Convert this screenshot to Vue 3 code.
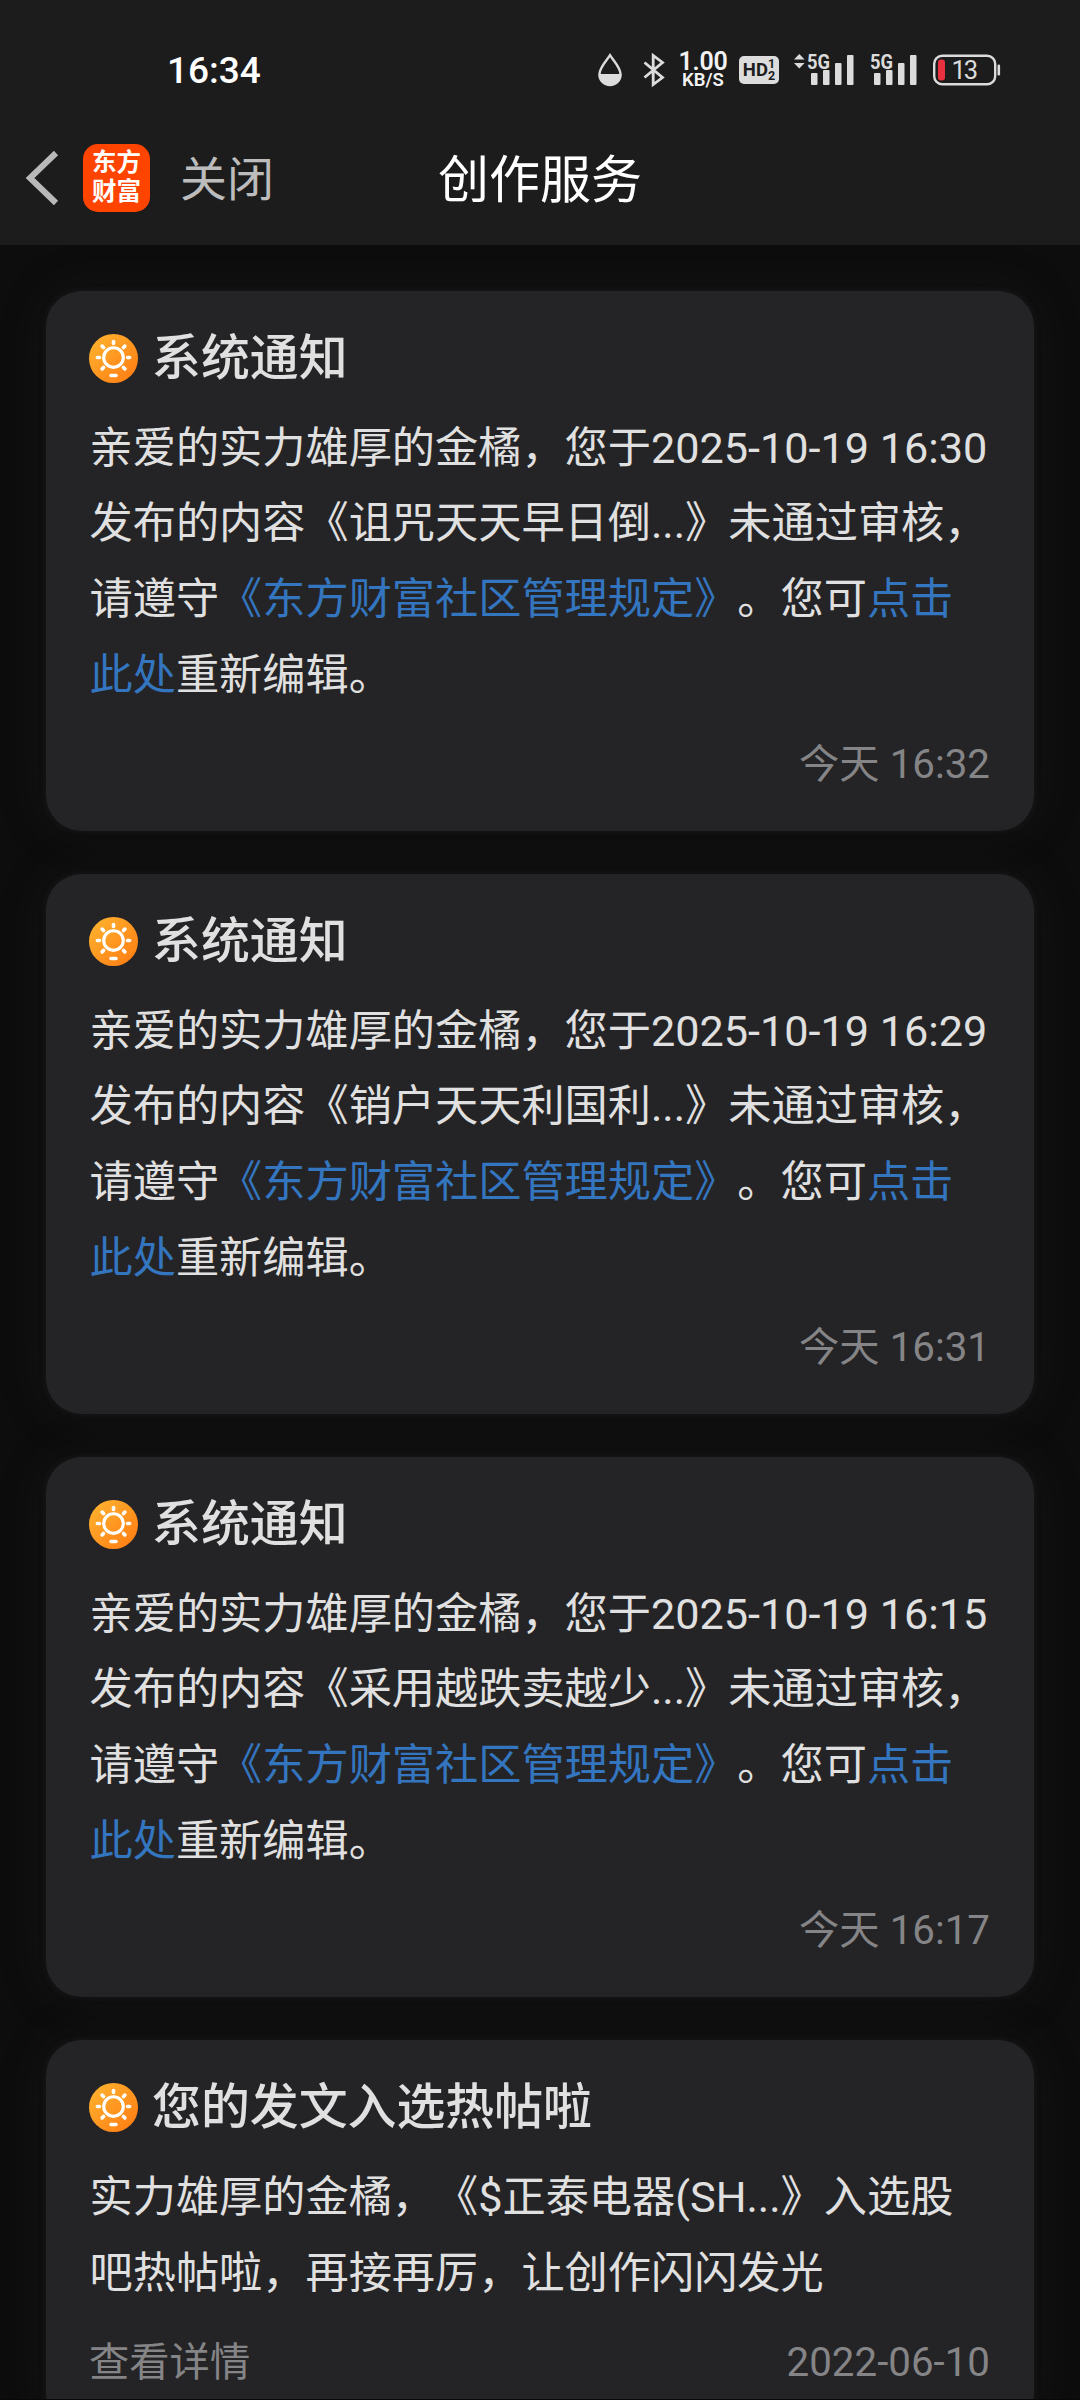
<script setup>
const notices = [
  { id: 1, title: '系统通知', at: '2025-10-19 16:30', post: '诅咒天天早日倒...', time: '今天 16:32' },
  { id: 2, title: '系统通知', at: '2025-10-19 16:29', post: '销户天天利国利...', time: '今天 16:31' },
  { id: 3, title: '系统通知', at: '2025-10-19 16:15', post: '采用越跌卖越少...', time: '今天 16:17' },
  {
    id: 4,
    title: '您的发文入选热帖啦',
    lines: ['实力雄厚的金橘，《$正泰电器(SH...》入选股', '吧热帖啦，再接再厉，让创作闪闪发光'],
    more: '查看详情',
    time: '2022-06-10'
  }
]
const rays = [0, 45, 90, 135, 225, 270, 315]
</script>

<template>
  <div class="page">
    <header class="header">
      <div class="status">
        <span class="clock">16:34</span>
        <div class="indicators">
          <svg class="drop" width="24" height="34" viewBox="0 0 24 34">
            <path d="M12 2.2C15 7 22.6 14.500 22.600 21.500A10.600 10.600 0 0 1 1.400 21.500C1.400 14.500 9 7 12 2.200Z" fill="none" stroke="#dcdcdc" stroke-width="2.400" />
            <path d="M1.400 21H22.600A10.600 10.600 0 0 1 1.400 21Z" fill="#dcdcdc" />
          </svg>
          <svg class="bt" width="22" height="34" viewBox="0 0 22 34">
            <path d="M1.500 9.500L19.500 24.500L10.200 31.500V2.500L19.500 9.500L1.500 24.500" fill="none" stroke="#dcdcdc" stroke-width="2.800" />
          </svg>
          <div class="speed"><b>1.00</b><span>KB/S</span></div>
          <div class="hd">
            <span class="hd-text">HD</span>
            <span class="hd-nums"><i>1</i><i>2</i></span>
          </div>
          <svg class="sig1" width="60" height="34" viewBox="0 0 60 34" fill="#dcdcdc">
            <path d="M0 6.500L5.300 1L10.600 6.500ZM0 10H10.600L5.300 15.500Z" />
            <text x="13" y="15.500" font-size="20.500" font-weight="700" textLength="23" lengthAdjust="spacingAndGlyphs">5G</text>
            <rect x="17" y="20" width="6.500" height="12" rx="1" />
            <rect x="29" y="17" width="6.500" height="15" rx="1" />
            <rect x="41" y="10" width="6.500" height="22" rx="1" />
            <rect x="53" y="2" width="6.500" height="30" rx="1" />
          </svg>
          <svg class="sig2" width="47" height="34" viewBox="0 0 47 34" fill="#dcdcdc">
            <text x="0" y="15.500" font-size="20.500" font-weight="700" textLength="23" lengthAdjust="spacingAndGlyphs">5G</text>
            <rect x="4" y="20" width="6.500" height="12" rx="1" />
            <rect x="16" y="17" width="6.500" height="15" rx="1" />
            <rect x="28" y="10" width="6.500" height="22" rx="1" />
            <rect x="40" y="2" width="6.500" height="30" rx="1" />
          </svg>
          <svg class="battery" width="68" height="34" viewBox="0 0 68 34">
            <rect x="1.200" y="2.700" width="61" height="28.600" rx="8" fill="none" stroke="#dcdcdc" stroke-width="2.400" />
            <rect x="5" y="6.500" width="7" height="21" rx="3" fill="#e8303e" />
            <rect x="64.500" y="11.500" width="2.600" height="11" rx="1.200" fill="#dcdcdc" />
            <text x="18.500" y="26" font-size="25.500" textLength="26.500" fill="#dcdcdc">13</text>
          </svg>
        </div>
      </div>
      <nav class="nav">
        <div class="left">
          <svg class="back" width="34" height="58" viewBox="0 0 34 58">
            <path d="M31 4L5 29L31 54" fill="none" stroke="#b9b9b9" stroke-width="6" />
          </svg>
          <div class="logo"><span>东方</span><span>财富</span></div>
          <span class="close">关闭</span>
        </div>
        <h1>创作服务</h1>
        <div class="right"></div>
      </nav>
    </header>

    <main class="list">
      <article v-for="n in notices" :key="n.id" class="card">
        <div class="head">
          <svg class="sun" width="49" height="49" viewBox="0 0 50 50">
            <defs>
              <linearGradient :id="'g' + n.id" x1="0" y1="0" x2="1" y2="1">
                <stop offset=".1" stop-color="#ffb02e" />
                <stop offset=".9" stop-color="#ff7f14" />
              </linearGradient>
            </defs>
            <circle cx="25" cy="25" r="25" :fill="'url(#g' + n.id + ')'" />
            <circle cx="25" cy="24" r="10" fill="none" stroke="#fff" stroke-width="3.200" />
            <path v-for="r in rays" :key="r" d="M25 7.600V9.600" :transform="`rotate(${r} 25 24)`" stroke="#fff" stroke-width="3.700" stroke-linecap="round" />
            <path d="M22.500 42.300H27.500" stroke="#fff" stroke-width="3.700" stroke-linecap="round" />
          </svg>
          <h2>{{ n.title }}</h2>
        </div>
        <div class="body">
          <template v-if="n.lines">
            <p v-for="l in n.lines" :key="l">{{ l }}</p>
          </template>
          <template v-else>
            <p>亲爱的实力雄厚的金橘，您于{{ n.at }}</p>
            <p>发布的内容《{{ n.post }}》未通过审核，</p>
            <p>请遵守<a>《东方财富社区管理规定》</a>。您可<a>点击</a></p>
            <p><a>此处</a>重新编辑。</p>
          </template>
        </div>
        <footer class="foot"><span>{{ n.more }}</span><time>{{ n.time }}</time></footer>
      </article>
    </main>
  </div>
</template>

<style>
body { background: #0e0e0e; }
</style>

<style scoped>
.page {
  width: 1080px;
  height: 2400px;
  box-sizing: border-box;
  border-bottom: 1px solid #080808;
  overflow: hidden;
  background: #0d0d0d;
  font-family: Roboto, "Noto Sans CJK SC", sans-serif;
  text-spacing-trim: space-all;
  white-space: nowrap;
}
h1, h2, p { margin: 0; }
svg { overflow: visible; }
.header { height: 245px; background: #1c1c1c; }
.status {
  height: 111px;
  padding: 28px 79px 0 167px;
  box-sizing: border-box;
  display: flex;
  justify-content: space-between;
  align-items: center;
}
.clock { padding-top: 2px; font-size: 37px; font-weight: 500; line-height: 44px; color: #fff; }
.indicators { display: flex; align-items: center; }
.bt { margin-left: 21px; }
.speed {
  width: 48px;
  margin-left: 14px;
  display: flex;
  flex-direction: column;
  align-items: center;
  color: #f2f2f2;
}
.speed b { font: 600 25px/20px Roboto, sans-serif; letter-spacing: -.2px; }
.speed span { font: 600 18.500px/16px Roboto, sans-serif; }
.hd {
  width: 40px;
  height: 28px;
  margin-left: 12px;
  border-radius: 5px;
  background: #dcdcdc;
  color: #1c1c1c;
  display: flex;
  align-items: center;
  justify-content: center;
  font-weight: 700;
}
.hd-text { font-size: 18.500px; line-height: 20px; }
.hd-nums { display: flex; flex-direction: column; }
.hd-nums i { font-style: normal; font-size: 12.500px; line-height: 12px; }
.sig1 { margin-left: 15px; }
.sig2 { margin-left: 16px; }
.battery { margin-left: 16px; }
.nav { height: 134px; display: flex; align-items: center; }
.left, .right { flex: 1; }
.left { display: flex; align-items: center; }
.back { margin-left: 25px; }
.logo {
  width: 67px;
  height: 68px;
  margin-left: 24px;
  border-radius: 15px;
  background: #ff4400;
  color: #fff;
  display: flex;
  flex-direction: column;
  align-items: center;
  justify-content: center;
  font-size: 24.500px;
  line-height: 29px;
  font-weight: 700;
}
.logo span:last-child { padding-bottom: 2px; }
.close { margin-left: 30px; padding-top: 4px; font-size: 47px; line-height: 60px; color: #bcbcbc; }
h1 { padding-top: 5px; font-size: 51px; line-height: 66px; font-weight: 400; color: #fff; }
.list { padding: 46px 46px 0; display: flex; flex-direction: column; gap: 43.300px; }
.card {
  padding: 31px 44px 28.500px 43px;
  border-radius: 36px;
  background: #242426;
  box-shadow: 0 0 7px rgba(60, 60, 60, .25), 0 0 50px rgba(50, 50, 50, .2);
}
.head { height: 74px; display: flex; align-items: center; }
.sun { margin-bottom: 2px; }
h2 { margin-left: 14px; font-size: 48.900px; line-height: 70px; font-weight: 500; color: #e0e0e0; }
.body { margin-top: 14.500px; padding-left: .5px; font-size: 43.200px; line-height: 75.700px; color: #e0e0e0; }
a { color: #3475bf; }
.foot {
  height: 75px;
  margin-top: 14px;
  display: flex;
  justify-content: space-between;
  align-items: center;
  font-size: 40.300px;
  line-height: 60px;
  color: #858587;
}
</style>
